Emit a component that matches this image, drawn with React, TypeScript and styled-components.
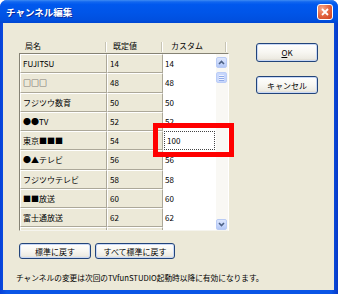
import React from "react";
import styled, { createGlobalStyle } from "styled-components";

const GlobalStyle = createGlobalStyle`
  html, body { margin: 0; padding: 0; background: #ffffff; }
  body {
    width: 338px; height: 294px; overflow: hidden;
    font-family: "Noto Sans CJK JP", "Noto Sans", sans-serif;
    color: #000;
  }
`;

const Window = styled.div`
  width: 338px;
  height: 294px;
  box-sizing: border-box;
  display: flex;
  flex-direction: column;
  background: linear-gradient(90deg, #0841D8 0%, #0A55E6 2%, #0A55E6 98%, #0638C6 100%);
  border-radius: 7px 7px 0 0;
  overflow: hidden;
`;

const TitleBar = styled.div`
  height: 23px;
  flex-shrink: 0;
  display: flex;
  align-items: center;
  justify-content: space-between;
  padding: 0 5px 0 6px;
  background: linear-gradient(180deg, #3F8CF3 0%, #1267F0 8%, #0058EE 20%, #0055E8 55%, #0050E0 85%, #0046D2 100%);
`;

const Title = styled.span`
  font-size: 9.5px;
  font-weight: 700;
  color: #ffffff;
  text-shadow: 1px 1px 0 #0A2A9C;
  line-height: 12px;
  padding-top: 1px;
`;

const CloseButton = styled.div`
  width: 16px;
  height: 16px;
  box-sizing: border-box;
  border: 1px solid #ffffff;
  border-radius: 3px;
  background: radial-gradient(circle at 30% 25%, #F5A68A 0%, #E56A45 45%, #CC3E1C 100%);
  display: flex;
  align-items: center;
  justify-content: center;
  margin-top: 1px;
`;

const Body = styled.div`
  flex: 1;
  margin: 0 4px 4px 3px;
  background: #ECE9D8;
  position: relative;
  display: flex;
  flex-direction: column;
  padding: 14px 0 0 16px;
  box-sizing: border-box;
`;

const Main = styled.div`
  display: flex;
`;

const ListPanel = styled.div`
  display: flex;
  flex-direction: column;
  width: 210px;
`;

const Header = styled.div`
  display: flex;
  height: 16px;
`;

const HeaderCell = styled.div<{ $w: number; $pad: number }>`
  width: ${(p) => p.$w}px;
  flex-shrink: 0;
  position: relative;
  box-sizing: border-box;
  padding: 3px 0 0 ${(p) => p.$pad}px;
  font-size: 8px;
  line-height: 12px;
  &::after {
    content: "";
    position: absolute;
    right: 1px;
    top: 5px;
    bottom: 1px;
    width: 1px;
    background: #C7C4B4;
    box-shadow: 1px 0 0 #ffffff;
  }
`;

const GridBox = styled.div`
  display: flex;
  height: 178px;
  box-sizing: border-box;
  border-style: solid;
  border-width: 1px;
  border-color: #858274 #ffffff #F5F4EE #858274;
`;

const Table = styled.div`
  width: 196px;
  display: flex;
  flex-direction: column;
  overflow: hidden;
`;

const Row = styled.div`
  display: flex;
  height: 19.25px;
  flex-shrink: 0;
`;

const GridCell = styled.div<{ $w: number }>`
  width: ${(p) => p.$w}px;
  flex-shrink: 0;
  box-sizing: border-box;
  background: #ECE9D8;
  border-top: 1px solid #ffffff;
  border-left: 1px solid #ffffff;
  border-right: 1px solid #ACA899;
  border-bottom: 1px solid #ACA899;
  display: flex;
  align-items: center;
  padding-left: 2px;
  font-size: 8px;
  white-space: nowrap;
  overflow: hidden;
`;

const CustomCell = styled.div`
  width: 53px;
  flex-shrink: 0;
  box-sizing: border-box;
  background: #ffffff;
  display: flex;
  align-items: center;
  padding-left: 2px;
  font-size: 8px;
`;

const EditBox = styled.div`
  width: 51px;
  height: 19px;
  margin-left: -1px;
  box-sizing: border-box;
  border: 1px dotted #444;
  background: #ffffff;
  display: flex;
  align-items: center;
  padding-left: 2px;
  font-size: 8px;
`;

const ScrollBar = styled.div`
  width: 12px;
  flex-shrink: 0;
  background: #F9F8F4;
  display: flex;
  flex-direction: column;
  padding: 3px 1px 0 0;
  box-sizing: border-box;
`;

const ScrollButton = styled.div`
  width: 11px;
  height: 11px;
  box-sizing: border-box;
  border-radius: 2px;
  border: 1px solid #B9CBF5;
  background: linear-gradient(180deg, #DCE6FD 0%, #C5D5FB 60%, #B4C8F6 100%);
  display: flex;
  align-items: center;
  justify-content: center;
`;

const Thumb = styled.div`
  width: 11px;
  height: 11px;
  margin-top: 4px;
  box-sizing: border-box;
  border-radius: 2px;
  border: 1px solid #BBCDF7;
  background: linear-gradient(90deg, #CCDAFC 0%, #C4D4FB 100%);
  display: flex;
  flex-direction: column;
  align-items: center;
  justify-content: center;
  gap: 1px;
`;

const Grip = styled.div`
  width: 5px;
  height: 1px;
  background: #EEF3FF;
  box-shadow: 0 1px 0 #8FA9E8;
`;

const Spacer = styled.div`
  flex: 1;
`;

const SideButtons = styled.div`
  display: flex;
  flex-direction: column;
  gap: 14px;
  margin-left: 27px;
  padding-top: 6px;
`;

const XPButton = styled.div<{ $w: number; $h: number }>`
  width: ${(p) => p.$w}px;
  height: ${(p) => p.$h}px;
  box-sizing: border-box;
  border: 1px solid #22447A;
  border-radius: 3px;
  background: linear-gradient(180deg, #FFFFFF 0%, #F7F6F1 50%, #EDEBE3 85%, #D9D4C8 100%);
  box-shadow: inset 0 0 0 1px #C8D8F6;
  display: flex;
  align-items: center;
  justify-content: center;
  font-size: 8px;
  color: #000;
  white-space: nowrap;
`;

const Underline = styled.span`
  text-decoration: underline;
`;

const BottomRow = styled.div`
  display: flex;
  gap: 4px;
  margin-top: 12px;
`;

const Footer = styled.div`
  margin: 14px 0 0 -3px;
  font-size: 7.7px;
  line-height: 10px;
  white-space: nowrap;
`;

const Annotation = styled.div`
  position: absolute;
  left: 150px;
  top: 100px;
  width: 81px;
  height: 34px;
  box-sizing: border-box;
  border: 5px solid #FF0000;
  pointer-events: none;
`;

type Item = { name: string; def: string; custom: string; editing?: boolean };

const items: Item[] = [
  { name: "FUJITSU", def: "14", custom: "14" },
  { name: "□□□", def: "48", custom: "48" },
  { name: "フジツウ数育", def: "50", custom: "50" },
  { name: "●●TV", def: "52", custom: "52" },
  { name: "東京■■■", def: "54", custom: "100", editing: true },
  { name: "●▲テレビ", def: "56", custom: "56" },
  { name: "フジツウテレビ", def: "58", custom: "58" },
  { name: "■■放送", def: "60", custom: "60" },
  { name: "富士通放送", def: "62", custom: "62" },
  { name: "", def: "", custom: "" },
];

const Chevron = ({ up }: { up?: boolean }) => (
  <svg width="7" height="5" viewBox="0 0 7 5">
    <path
      d={up ? "M1 4 L3.5 1.5 L6 4" : "M1 1 L3.5 3.5 L6 1"}
      fill="none"
      stroke="#4D6185"
      strokeWidth="1.6"
    />
  </svg>
);

export default function App() {
  return (
    <>
      <GlobalStyle />
      <Window>
        <TitleBar>
          <Title>チャンネル編集</Title>
          <CloseButton>
            <svg width="8" height="8" viewBox="0 0 8 8">
              <path d="M1 1 L7 7 M7 1 L1 7" stroke="#fff" strokeWidth="1.8" />
            </svg>
          </CloseButton>
        </TitleBar>
        <Body>
          <Main>
            <ListPanel>
              <Header>
                <HeaderCell $w={88} $pad={6}>局名</HeaderCell>
                <HeaderCell $w={56} $pad={6}>既定値</HeaderCell>
                <HeaderCell $w={64} $pad={8}>カスタム</HeaderCell>
              </Header>
              <GridBox>
                <Table>
                  {items.map((it, i) => (
                    <Row key={i}>
                      <GridCell $w={87}>{it.name}</GridCell>
                      <GridCell $w={56}>{it.def}</GridCell>
                      <CustomCell>
                        {it.editing ? <EditBox>{it.custom}</EditBox> : it.custom}
                      </CustomCell>
                    </Row>
                  ))}
                </Table>
                <ScrollBar>
                  <ScrollButton>
                    <Chevron up />
                  </ScrollButton>
                  <Thumb>
                    <Grip />
                    <Grip />
                    <Grip />
                  </Thumb>
                  <Spacer />
                  <ScrollButton>
                    <Chevron />
                  </ScrollButton>
                </ScrollBar>
              </GridBox>
            </ListPanel>
            <SideButtons>
              <XPButton $w={62} $h={19}>
                <Underline>O</Underline>K
              </XPButton>
              <XPButton $w={62} $h={18}>キャンセル</XPButton>
            </SideButtons>
          </Main>
          <BottomRow>
            <XPButton $w={72} $h={16}>標準に戻す</XPButton>
            <XPButton $w={80} $h={16}>すべて標準に戻す</XPButton>
          </BottomRow>
          <Footer>チャンネルの変更は次回のTVfunSTUDIO起動時以降に有効になります。</Footer>
          <Annotation />
        </Body>
      </Window>
    </>
  );
}
